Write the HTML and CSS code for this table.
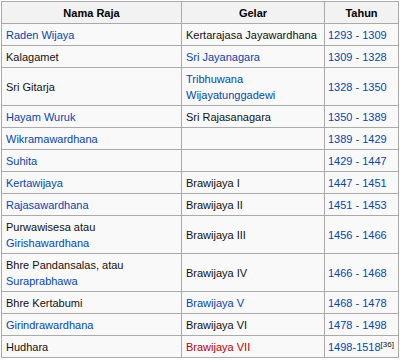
FILE: index.html
```html
<!DOCTYPE html>
<html>
<head>
<meta charset="utf-8">
<link rel="stylesheet" href="styles.css">
</head>
<body>
<table class="wikitable">
  <colgroup>
    <col class="c1">
    <col class="c2">
    <col class="c3">
  </colgroup>
  <thead>
    <tr><th>Nama Raja</th><th>Gelar</th><th>Tahun</th></tr>
  </thead>
  <tbody>
    <tr><td><a class="link">Raden Wijaya</a></td><td>Kertarajasa Jayawardhana</td><td class="year"><a class="link">1293 - 1309</a></td></tr>
    <tr><td>Kalagamet</td><td><a class="link">Sri Jayanagara</a></td><td class="year"><a class="link">1309 - 1328</a></td></tr>
    <tr><td>Sri Gitarja</td><td><a class="link">Tribhuwana Wijayatunggadewi</a></td><td class="year"><a class="link">1328 - 1350</a></td></tr>
    <tr><td><a class="link">Hayam Wuruk</a></td><td>Sri Rajasanagara</td><td class="year"><a class="link">1350 - 1389</a></td></tr>
    <tr><td><a class="link">Wikramawardhana</a></td><td></td><td class="year"><a class="link">1389 - 1429</a></td></tr>
    <tr><td><a class="link">Suhita</a></td><td></td><td class="year"><a class="link">1429 - 1447</a></td></tr>
    <tr><td><a class="link">Kertawijaya</a></td><td>Brawijaya I</td><td class="year"><a class="link">1447 - 1451</a></td></tr>
    <tr><td><a class="link">Rajasawardhana</a></td><td>Brawijaya II</td><td class="year"><a class="link">1451 - 1453</a></td></tr>
    <tr><td>Purwawisesa atau <a class="link">Girishawardhana</a></td><td>Brawijaya III</td><td class="year"><a class="link">1456 - 1466</a></td></tr>
    <tr><td>Bhre Pandansalas, atau <a class="link">Suraprabhawa</a></td><td>Brawijaya IV</td><td class="year"><a class="link">1466 - 1468</a></td></tr>
    <tr><td>Bhre Kertabumi</td><td><a class="link">Brawijaya V</a></td><td class="year"><a class="link">1468 - 1478</a></td></tr>
    <tr><td><a class="link">Girindrawardhana</a></td><td>Brawijaya VI</td><td class="year"><a class="link">1478 - 1498</a></td></tr>
    <tr><td>Hudhara</td><td><a class="link new">Brawijaya VII</a></td><td class="year"><a class="link">1498-1518</a><sup class="ref">[36]</sup></td></tr>
  </tbody>
</table>
</body>
</html>
```
FILE: styles.css
```css
html, body {
  margin: 0;
  padding: 0;
  background: #ffffff;
}
body {
  padding: 1px 0 0 1px;
  font-family: "Liberation Sans", Arial, sans-serif;
  font-size: 11px;
  color: #111111;
}
.wikitable {
  border-collapse: collapse;
  table-layout: fixed;
  width: 397px;
  background: #f9f9f9;
  border: 1px solid #aaaaaa;
}
.c1 { width: 180px; }
.c2 { width: 143px; }
.c3 { width: 74px; }
.wikitable th,
.wikitable td {
  border: 1px solid #aaaaaa;
  padding: 3px 4px 2px 4px;
  line-height: 16px;
  height: 16px;
  text-align: left;
  vertical-align: middle;
}
.wikitable th {
  background: #f2f2f2;
  text-align: center;
  font-weight: bold;
  color: #000000;
}
.wikitable td.year {
  padding-left: 3px;
  padding-right: 0;
  white-space: nowrap;
}
.link {
  color: #0645ad;
  text-decoration: none;
}
.link.new {
  color: #ba0000;
}
.ref {
  font-size: 8px;
  line-height: 1;
  vertical-align: 4px;
}
```
